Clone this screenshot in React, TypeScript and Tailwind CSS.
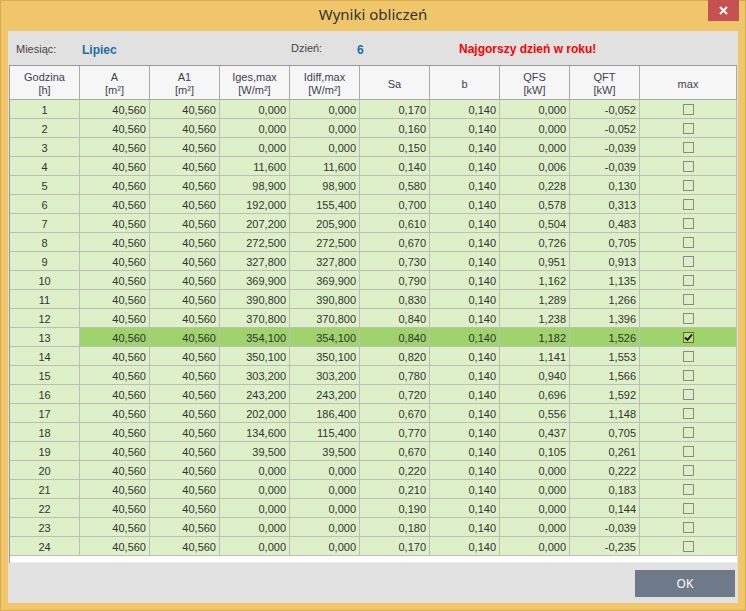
import React from "react";

type Row = [string, string, string, string, string, string];

const rows: Row[] = [
  ["0,000", "0,000", "0,170", "0,140", "0,000", "-0,052"],
  ["0,000", "0,000", "0,160", "0,140", "0,000", "-0,052"],
  ["0,000", "0,000", "0,150", "0,140", "0,000", "-0,039"],
  ["11,600", "11,600", "0,140", "0,140", "0,006", "-0,039"],
  ["98,900", "98,900", "0,580", "0,140", "0,228", "0,130"],
  ["192,000", "155,400", "0,700", "0,140", "0,578", "0,313"],
  ["207,200", "205,900", "0,610", "0,140", "0,504", "0,483"],
  ["272,500", "272,500", "0,670", "0,140", "0,726", "0,705"],
  ["327,800", "327,800", "0,730", "0,140", "0,951", "0,913"],
  ["369,900", "369,900", "0,790", "0,140", "1,162", "1,135"],
  ["390,800", "390,800", "0,830", "0,140", "1,289", "1,266"],
  ["370,800", "370,800", "0,840", "0,140", "1,238", "1,396"],
  ["354,100", "354,100", "0,840", "0,140", "1,182", "1,526"],
  ["350,100", "350,100", "0,820", "0,140", "1,141", "1,553"],
  ["303,200", "303,200", "0,780", "0,140", "0,940", "1,566"],
  ["243,200", "243,200", "0,720", "0,140", "0,696", "1,592"],
  ["202,000", "186,400", "0,670", "0,140", "0,556", "1,148"],
  ["134,600", "115,400", "0,770", "0,140", "0,437", "0,705"],
  ["39,500", "39,500", "0,670", "0,140", "0,105", "0,261"],
  ["0,000", "0,000", "0,220", "0,140", "0,000", "0,222"],
  ["0,000", "0,000", "0,210", "0,140", "0,000", "0,183"],
  ["0,000", "0,000", "0,190", "0,140", "0,000", "0,144"],
  ["0,000", "0,000", "0,180", "0,140", "0,000", "-0,039"],
  ["0,000", "0,000", "0,170", "0,140", "0,000", "-0,235"],
];

const headers: [string, string?][] = [
  ["Godzina", "[h]"],
  ["A", "[m²]"],
  ["A1", "[m²]"],
  ["Iges,max", "[W/m²]"],
  ["Idiff,max", "[W/m²]"],
  ["Sa"],
  ["b"],
  ["QFS", "[kW]"],
  ["QFT", "[kW]"],
  ["max"],
];

const MAX_ROW = 13;

function CheckBox({ checked }: { checked: boolean }) {
  if (checked) {
    return (
      <div className="w-[11px] h-[11px] border border-[#6b6b10] bg-[#b5df8a] flex items-center justify-center">
        <svg width="9" height="9" viewBox="0 0 9 9">
          <path d="M1 4.5 L3.5 7 L8 1.5" stroke="#111" strokeWidth="1.8" fill="none" />
        </svg>
      </div>
    );
  }
  return <div className="w-[11px] h-[11px] border border-[#8a8a8a]" />;
}

export default function App() {
  const cell = "shrink-0 border-r border-b border-[#bdbdbd] flex items-center";

  return (
    <div className="w-[746px] h-[611px] bg-[#f0c66b] border border-[#d8ab4f] flex flex-col font-['Liberation_Sans',Arial,sans-serif]">
      {/* title bar */}
      <div className="h-[30px] relative flex items-center justify-center">
        <span className="text-[15px] text-[#333] font-['Noto_Sans','Liberation_Sans',sans-serif] -mt-1">
          Wyniki obliczeń
        </span>
        <div className="absolute right-[6px] -top-px w-[31px] h-[21px] bg-[#c75050] flex items-center justify-center">
          <svg width="9" height="9" viewBox="0 0 9 9">
            <path d="M1 1 L8 8 M8 1 L1 8" stroke="#fff" strokeWidth="2" />
          </svg>
        </div>
      </div>

      {/* content */}
      <div className="mx-[7px] mb-[7px] flex-1 bg-[#e1e1e1] flex flex-col">
        <div className="h-[34px] flex items-center pl-[8px] pt-[3px] text-[11px]">
          <span className="w-[66px] text-[#444]">Miesiąc:</span>
          <span className="w-[209px] text-[#1d6fa5] font-bold text-[12px]">Lipiec</span>
          <span className="w-[66px] text-[#444] -mt-[3px]">Dzień:</span>
          <span className="w-[102px] text-[#1d6fa5] font-bold text-[12px]">6</span>
          <span className="text-[#ff0000] font-bold text-[12px] -mt-px">Najgorszy dzień w roku!</span>
        </div>

        <div className="ml-px mr-px h-[498px] bg-white border-l border-t border-[#9a9a9a] flex flex-col">
          {/* header */}
          <div className="flex h-[34px] shrink-0 bg-[#f6f6f6]">
            {headers.map(([a, b], i) => (
              <div
                key={a}
                className={`${i === 9 ? "w-[97px]" : "w-[70px]"} shrink-0 border-r border-b border-[#a9a9a9] flex flex-col items-center justify-center pt-[3px] text-[11px] leading-[13px] text-[#3f3f52]`}
              >
                <span>{a}</span>
                {b && <span>{b}</span>}
              </div>
            ))}
          </div>

          {/* rows */}
          {rows.map((r, idx) => {
            const n = idx + 1;
            const hi = n === MAX_ROW;
            const bg = hi ? "bg-[#9fd46c]" : "bg-[#ddf0c8]";
            const values = ["40,560", "40,560", ...r];
            return (
              <div key={n} className="flex h-[19px] shrink-0 text-[11px] text-[#333]">
                <div className={`${cell} w-[70px] justify-center pt-[2px] bg-[#ddf0c8]`}>{n}</div>
                {values.map((v, j) => (
                  <div key={j} className={`${cell} w-[70px] justify-end pr-[3px] pt-[2px] ${bg}`}>
                    {v}
                  </div>
                ))}
                <div className={`${cell} w-[97px] justify-center ${bg}`}>
                  <CheckBox checked={hi} />
                </div>
              </div>
            );
          })}
          <div className="flex-1" />
          <div className="h-px bg-[#ececec]" />
        </div>

        <div className="flex justify-end pt-[7px] pr-[3px]">
          <button className="w-[100px] h-[27px] bg-[#6e7989] text-white text-[12px] font-['Noto_Sans','Liberation_Sans',sans-serif]">
            OK
          </button>
        </div>
      </div>
    </div>
  );
}
